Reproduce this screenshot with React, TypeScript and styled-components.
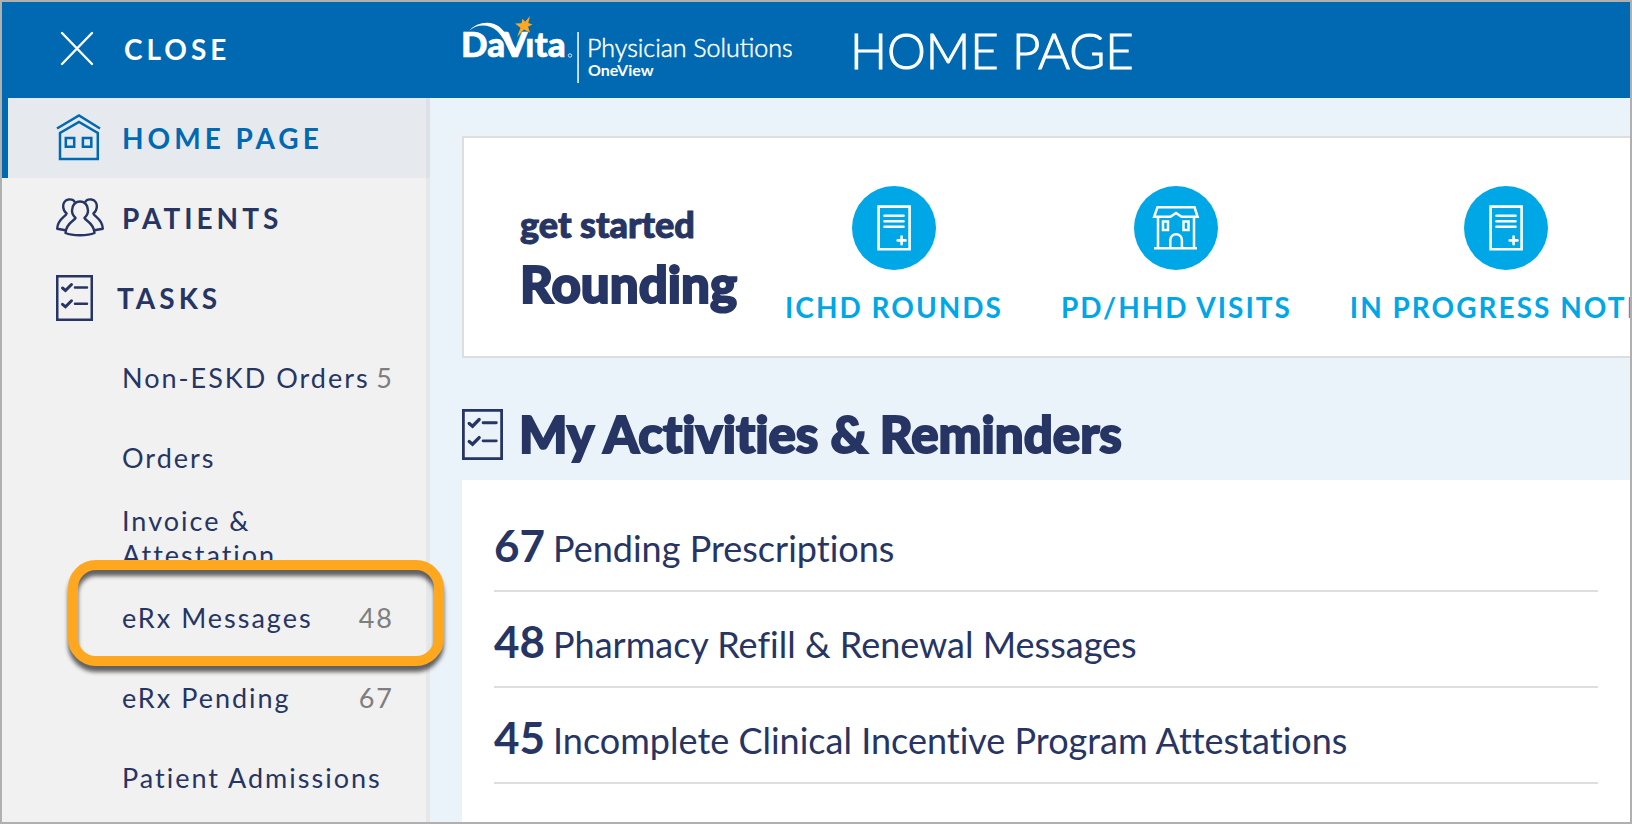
import React from 'react';
import styled, { createGlobalStyle, css } from 'styled-components';

const color = {
  brand: '#0069b2',
  navy: '#263563',
  sky: '#00a7e6',
  grey: '#7e7e7e',
  line: '#dedede',
  highlight: '#ffa81f',
};

const GlobalStyle = createGlobalStyle`
  *, *::before, *::after { box-sizing: border-box; }
  body {
    margin: 0;
    font-family: Lato, "Open Sans", sans-serif;
    color: ${color.navy};
  }
  ul { list-style: none; margin: 0; padding: 0; }
  h1, h2, p { margin: 0; }
  a { color: inherit; text-decoration: none; }
`;

const Frame = styled.div`
  display: flex;
  flex-direction: column;
  min-height: 100vh;
  border: 2px solid #b0b0b0;
  overflow: hidden;
`;

const Header = styled.header`
  display: flex;
  height: 96px;
  background: ${color.brand};
  color: #fff;
`;

const CloseButton = styled.button`
  display: flex;
  align-items: center;
  gap: 28px;
  flex: 0 0 428px;
  padding: 0 0 2px 56px;
  border: 0;
  background: none;
  color: inherit;
  font: 700 28px/34px Lato, sans-serif;
  letter-spacing: 4px;
  cursor: pointer;
`;

const Brand = styled.div`
  display: flex;
  align-items: center;
  gap: 58px;
  padding-left: 28px;
`;

const PageTitle = styled.h1`
  font-size: 49px;
  line-height: 58px;
  font-weight: 300;
  -webkit-text-stroke: 1px currentColor;
  white-space: nowrap;
`;

const Body = styled.div`
  display: flex;
  flex: 1;
`;

const Sidebar = styled.nav`
  position: relative;
  z-index: 1;
  flex: 0 0 428px;
  background: #f1f1f1;
  box-shadow: inset -4px 0 #e8e7e7;
`;

const NavLink = styled.a<{ $active?: boolean }>`
  display: flex;
  align-items: center;
  gap: 18px;
  height: 80px;
  padding-left: 48px;
  border-left: 6px solid transparent;
  font-size: 28px;
  line-height: 34px;
  font-weight: 700;
  letter-spacing: 4px;
  ${(p) =>
    p.$active &&
    css`
      border-left-color: ${color.brand};
      background: #e6eaef;
      box-shadow: inset -4px 0 #dde1e6;
      color: ${color.brand};
    `}
`;

const SubItem = styled.li`
  position: relative;
`;

const SubLink = styled.a`
  display: flex;
  align-items: center;
  justify-content: space-between;
  height: 80px;
  padding: 0 36px 0 120px;
  font-size: 27px;
  line-height: 34px;
  letter-spacing: 2px;
`;

const Count = styled.span`
  color: ${color.grey};
`;

const Highlight = styled.span`
  position: absolute;
  inset: -18px -14px -8px 66px;
  border: 10px solid ${color.highlight};
  border-radius: 28px;
  filter: drop-shadow(0 6px 2px rgba(0, 0, 0, 0.6));
  pointer-events: none;
`;

const Main = styled.main`
  display: flex;
  flex-direction: column;
  flex: 1;
  min-width: 0;
  padding: 38px 0 0 32px;
  background: #ebf3fa;
`;

const StartCard = styled.section`
  display: flex;
  align-items: flex-start;
  padding: 48px 0 32px 56px;
  border: 2px solid ${color.line};
  border-right: 0;
  background: #fff;
  overflow: hidden;
`;

const displayFace = css`
  font-weight: 900;
  font-variant-ligatures: none;
  -webkit-text-stroke: 2px currentColor;
  white-space: nowrap;
`;

const StartHeading = styled.div`
  flex: none;
  margin: 12px 48px 0 0;
`;

const Kicker = styled.p`
  ${displayFace}
  -webkit-text-stroke-width: 1px;
  font-size: 36px;
  line-height: 52px;
`;

const StartTitle = styled.h2`
  ${displayFace}
  font-size: 51px;
  line-height: 68px;
`;

const Shortcuts = styled.ul`
  display: flex;
  flex: none;
  gap: 58px;
`;

const Shortcut = styled.a`
  display: flex;
  flex-direction: column;
  align-items: center;
  gap: 20px;
  color: ${color.sky};
  font-size: 28px;
  line-height: 34px;
  font-weight: 700;
  letter-spacing: 2px;
  white-space: nowrap;
`;

const SectionHeading = styled.div`
  display: flex;
  align-items: center;
  gap: 16px;
  margin: 44px 0 14px;
`;

const SectionTitle = styled.h2`
  ${displayFace}
  font-size: 51px;
  line-height: 64px;
`;

const Panel = styled.section`
  flex: 1;
  padding: 16px 32px 0;
  background: #fff;
`;

const Reminder = styled.a`
  display: flex;
  align-items: baseline;
  gap: 8px;
  height: 96px;
  padding-top: 4px;
  border-bottom: 2px solid ${color.line};
  font-size: 36px;
  line-height: 90px;
  font-variant-ligatures: none;
`;

const ReminderCount = styled.strong`
  font-size: 44px;
  font-weight: 700;
`;

const CloseIcon = () => (
  <svg width="38" height="38" viewBox="0 0 38 38" fill="none" stroke="currentColor" strokeWidth="2.4" strokeLinecap="round" aria-hidden="true">
    <path d="M4 3 34 34M34 3 4 34" />
  </svg>
);

const HomeIcon = () => (
  <svg width="48" height="48" viewBox="0 0 48 48" fill="none" stroke="currentColor" strokeWidth="2.5" aria-hidden="true">
    <path d="M1 14.5 23 1.5 44 14.5M4 45V19L23 8 41.8 19V45Z" />
    <path d="M9.8 24h8.4v8.7H9.8zM26.9 24h8.4v8.7h-8.4z" />
  </svg>
);

const personBehind = 'M19 8.2C17.500 5.600 15 5.200 12.600 5.500 8.600 6 7 9.500 7.200 13c.2 3 1.400 5 3.400 6.500C10 22.500 1.300 25 1.200 34.800L9.500 36.300';

const PatientsIcon = () => (
  <svg width="48" height="48" viewBox="0 0 48 48" fill="none" stroke="currentColor" strokeWidth="2.4" strokeLinejoin="round" aria-hidden="true">
    <path d="M24 7.500c-5 0-8 4-8 9 0 3.200 1.500 5.700 3.600 7.400C18 27 10 29 9.500 39c0 0 5 2.200 14.500 2.200S38.500 39 38.500 39C38 29 30 27 28.400 23.900 30.500 22.200 32 19.700 32 16.500c0-5-3-9-8-9z" />
    <path d={personBehind} />
    <path d={personBehind} transform="matrix(-1 0 0 1 48 0)" />
  </svg>
);

const ChecklistIcon = ({ width, height, box }: { width: number; height: number; box: string }) => (
  <svg width={width} height={height} viewBox={box} fill="none" stroke="currentColor" strokeWidth="2.5" aria-hidden="true">
    <path d="M1.250 1.250h34.500v43.500H1.250z" />
    <path d="M6.500 13 9.500 15.500 15.500 9.500M6.500 29.300 9.500 31.800 15.500 25.800" strokeLinecap="round" strokeWidth="3" />
    <path d="M19 12.400H31M19 28.700H31" strokeLinecap="round" />
  </svg>
);

const NoteIcon = () => (
  <svg width="84" height="84" viewBox="0 0 84 84" fill="none" stroke="#fff" strokeWidth="2.600" aria-hidden="true">
    <circle cx="42" cy="42" r="42" fill={color.sky} stroke="none" />
    <path d="M26.600 20.600h31v42.700h-31z" />
    <path d="M32.500 29.700H51.500M32.500 35.200H51.500M32.500 40.700H51.500M49.600 50.500V58.300M45.700 54.400H53.500" strokeLinecap="round" />
  </svg>
);

const ClinicIcon = () => (
  <svg width="84" height="84" viewBox="0 0 84 84" fill="none" stroke="#fff" strokeWidth="2.500" aria-hidden="true">
    <circle cx="42" cy="42" r="42" fill={color.sky} stroke="none" />
    <path d="M23.500 21.200H60.500L63.600 30.800H47.500L42 27 36.500 30.800H20.200Z" />
    <path d="M24 31V62M60 31V62M20 62.200H63" />
    <path d="M29 35.500h5v8.500h-5zM49.500 35.500h5v8.500h-5z" />
    <path d="M36.300 62V54a5.800 5.800 0 0 1 11.600 0V62" />
  </svg>
);

const Logo = () => (
  <svg width="334" height="72" viewBox="458 14 334 72" fill="#fff" fontFamily="Lato, sans-serif" role="img" aria-label="DaVita Physician Solutions OneView">
    <text x="461" y="57" fontSize="35" fontWeight="900" stroke="#fff" strokeWidth="0.600">DaVıta</text>
    <path d="M469.500 30.500C476 22 491 20 499 26.500 506 32 511 42 517 50L516 57H512C507 46 503 36 496.500 30.500 488 23 476 24.500 469.500 30.500Z" />
    <path d="M530 16 528.300 23 532.500 24.500 528 26.800 530 32.500 524 29.500 517 37 520.500 27.800 515 23.500 521.500 23.200 522.500 18.800 525.200 21.800Z" fill="#ffa81f" />
    <circle cx="570" cy="55.500" r="1.700" fill="none" stroke="#fff" strokeWidth="0.800" />
    <path d="M577.300 32h1.500v51h-1.500z" />
    <text x="587" y="57" fontSize="25" fontWeight="300" stroke="#fff" strokeWidth="0.500">Physician Solutions</text>
    <text x="588" y="76" fontSize="16" fontWeight="700">OneView</text>
  </svg>
);

const tasks: { label: React.ReactNode; key: string; count?: number; highlighted?: boolean }[] = [
  { key: 'non-eskd', label: 'Non-ESKD Orders', count: 5 },
  { key: 'orders', label: 'Orders' },
  { key: 'invoice', label: <>Invoice &amp;<br />Attestation</> },
  { key: 'erx-messages', label: 'eRx Messages', count: 48, highlighted: true },
  { key: 'erx-pending', label: 'eRx Pending', count: 67 },
  { key: 'admissions', label: 'Patient Admissions' },
];

const shortcuts = [
  { label: 'ICHD ROUNDS', icon: <NoteIcon /> },
  { label: 'PD/HHD VISITS', icon: <ClinicIcon /> },
  { label: 'IN PROGRESS NOTES', icon: <NoteIcon /> },
];

const reminders = [
  { count: 67, label: 'Pending Prescriptions' },
  { count: 48, label: 'Pharmacy Refill & Renewal Messages' },
  { count: 45, label: 'Incomplete Clinical Incentive Program Attestations' },
];

export default function App() {
  return (
    <Frame>
      <GlobalStyle />
      <Header>
        <CloseButton type="button">
          <CloseIcon />
          CLOSE
        </CloseButton>
        <Brand>
          <Logo />
          <PageTitle>HOME PAGE</PageTitle>
        </Brand>
      </Header>
      <Body>
        <Sidebar aria-label="Main">
          <NavLink href="#home" $active aria-current="page">
            <HomeIcon />
            HOME PAGE
          </NavLink>
          <NavLink href="#patients">
            <PatientsIcon />
            PATIENTS
          </NavLink>
          <NavLink href="#tasks">
            <ChecklistIcon width={43} height={46} box="0 0 43 46" />
            TASKS
          </NavLink>
          <ul>
            {tasks.map((t) => (
              <SubItem key={t.key}>
                <SubLink href={`#${t.key}`}>
                  <span>{t.label}</span>
                  {t.count !== undefined && <Count>{t.count}</Count>}
                </SubLink>
                {t.highlighted && <Highlight />}
              </SubItem>
            ))}
          </ul>
        </Sidebar>
        <Main>
          <StartCard>
            <StartHeading>
              <Kicker>get started</Kicker>
              <StartTitle>Rounding</StartTitle>
            </StartHeading>
            <Shortcuts>
              {shortcuts.map((s) => (
                <li key={s.label}>
                  <Shortcut href="#rounding">
                    {s.icon}
                    {s.label}
                  </Shortcut>
                </li>
              ))}
            </Shortcuts>
          </StartCard>
          <SectionHeading>
            <ChecklistIcon width={41} height={51} box="0 0 37 46" />
            <SectionTitle>My Activities &amp; Reminders</SectionTitle>
          </SectionHeading>
          <Panel>
            <ul>
              {reminders.map((r) => (
                <li key={r.label}>
                  <Reminder href="#reminders">
                    <ReminderCount>{r.count}</ReminderCount>
                    {r.label}
                  </Reminder>
                </li>
              ))}
            </ul>
          </Panel>
        </Main>
      </Body>
    </Frame>
  );
}
